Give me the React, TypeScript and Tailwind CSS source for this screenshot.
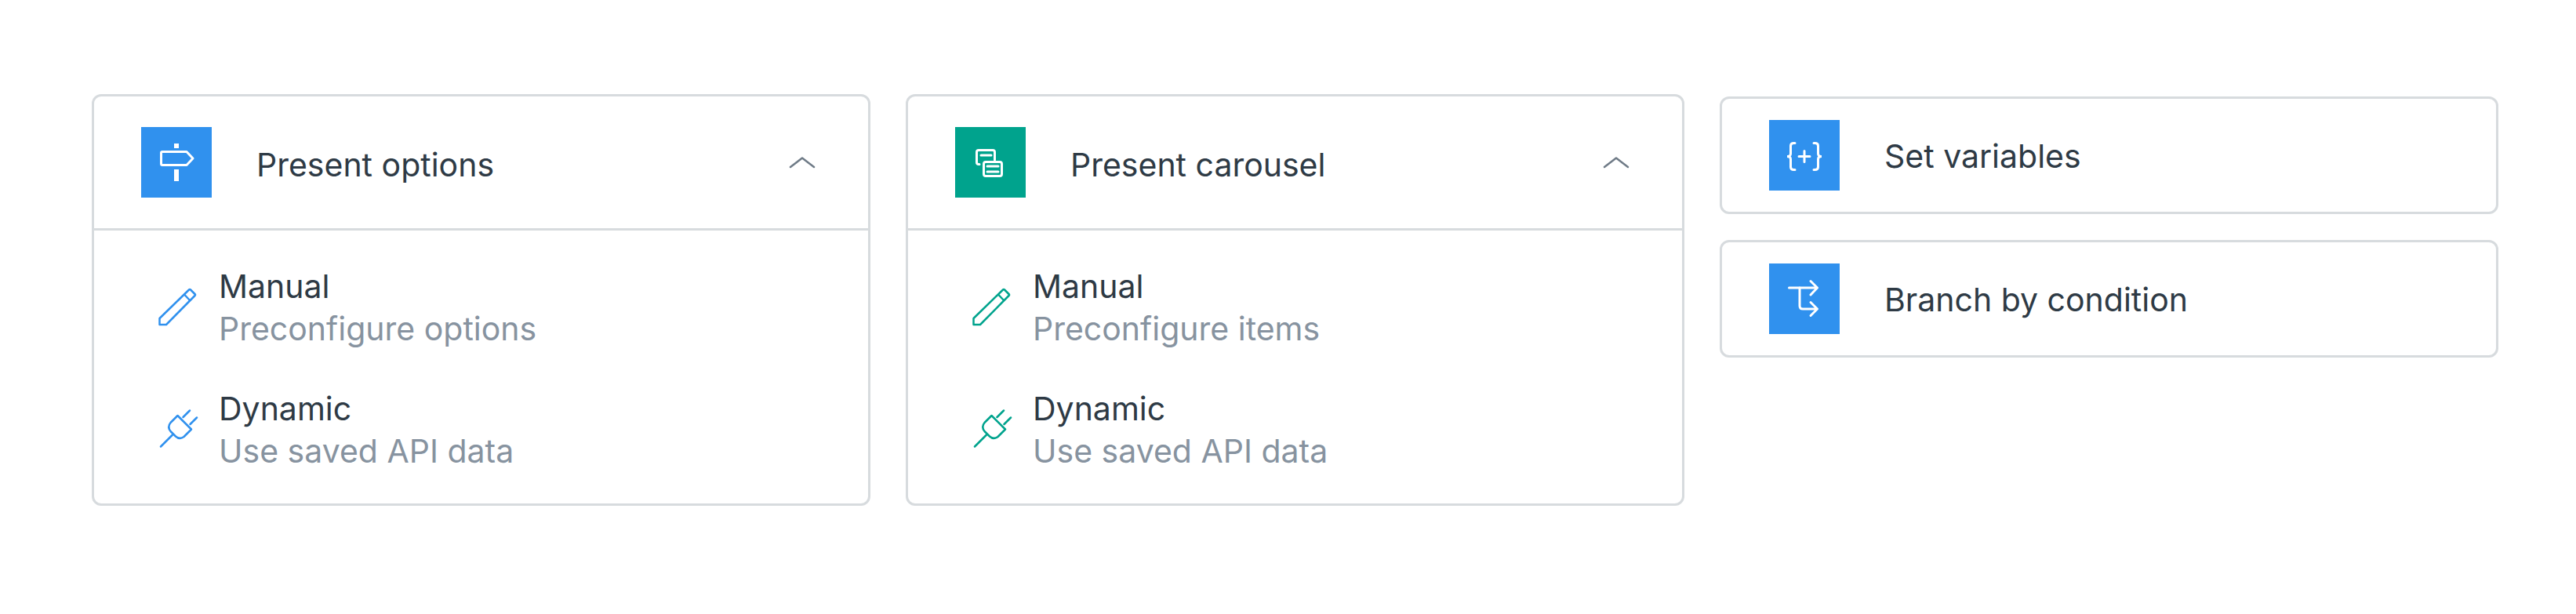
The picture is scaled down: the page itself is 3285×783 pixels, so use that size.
import type { ReactNode } from "react";

const Signpost = () => (
  <svg width="90" height="90" viewBox="0 0 90 90" fill="none" stroke="white" strokeWidth="3">
    <path d="M45 21v6M45 54v15" strokeWidth="6" />
    <path d="M27 31.5H58L66 40L58 48.5H27Q25.5 48.5 25.5 47V33Q25.5 31.5 27 31.5Z" strokeLinejoin="round" />
  </svg>
);

const CarouselIcon = () => (
  <svg width="90" height="90" viewBox="0 0 90 90" fill="none" stroke="white" strokeWidth="3" strokeLinecap="round">
    <path d="M31 47.5H30Q27.5 47.5 27.5 45V32Q27.5 29.5 30 29.5H48Q50.5 29.5 50.5 32V42" />
    <path d="M33 36H46M41 50H55M41 57H55" />
    <rect x="36.5" y="44.5" width="23" height="18" rx="2.5" />
  </svg>
);

const VariablesIcon = () => (
  <svg width="90" height="90" viewBox="0 0 90 90" fill="none" stroke="white" strokeWidth="3" strokeLinecap="round">
    <path d="M33 29.5H31.5Q27.5 29.5 27.5 33V43Q27.5 46.5 23 46.5Q27.5 46.5 27.5 50V60Q27.5 63.5 31.5 63.5H33" />
    <path d="M57 29.5H58.5Q62.5 29.5 62.5 33V43Q62.5 46.5 67 46.5Q62.5 46.5 62.5 50V60Q62.5 63.5 58.5 63.5H57" />
    <path d="M38 46.5H52M45 39.5V53.5" />
  </svg>
);

const BranchIcon = () => (
  <svg width="90" height="90" viewBox="0 0 90 90" fill="none" stroke="white" strokeWidth="3" strokeLinecap="round" strokeLinejoin="round">
    <path d="M25.5 31H61M53 22.5L61.5 31L53 40" />
    <path d="M39 31V54Q39 58 43 58H61M53 49.5L61.5 58L53 66.5" />
  </svg>
);

const Pencil = ({ color }: { color: string }) => (
  <svg width="100" height="100" viewBox="0 0.5 100 100" fill="none" stroke={color} strokeWidth="2.5" strokeLinejoin="round">
    <path d="M23.5 65.5V73.5H32L68.5 36.5Q69.5 35.5 68.5 34.5L63 29Q62 28 61 29Z" />
    <path d="M55 35L62.5 43" />
  </svg>
);

const Plug = ({ color }: { color: string }) => (
  <svg width="100" height="100" viewBox="0 -3.5 100 100" fill="none" stroke={color} strokeWidth="2.5" strokeLinecap="round" strokeLinejoin="round">
    <path d="M25 69L40 54" />
    <path d="M46.5 29.5L64 47L54.5 56.5Q49 60.5 44 56L37.5 49.5Q33 44 37.5 38.5Z" />
    <path d="M53.5 31.5L62 23M62.5 40.5L71 32" />
  </svg>
);

const Chevron = () => (
  <svg width="34" height="16" viewBox="0 0 34 16" fill="none" stroke="#6f7b87" strokeWidth="2.5" strokeLinecap="round" strokeLinejoin="round">
    <path d="M2 14L17 2.5L32 14" />
  </svg>
);

const Row = ({ icon, title, sub }: { icon: ReactNode; title: string; sub: string }) => (
  <div className="flex items-center">
    <div className="w-[99px] shrink-0">{icon}</div>
    <div className="pt-[3px] text-[41px] leading-[54px]">
      <div className="text-[#2e3a45]">{title}</div>
      <div className="text-[#8793a0]">{sub}</div>
    </div>
  </div>
);

const ExpandedCard = ({ icon, bg, color, title, sub }: { icon: ReactNode; bg: string; color: string; title: string; sub: string }) => (
  <div className="w-[993px] h-[525px] shrink-0 rounded-[12px] border-[3px] border-[#d7dbde]">
    <div className="h-[171px] flex items-center border-b-[3px] border-[#d7dbde] pl-[60px] pr-[67px]">
      <div className={`w-[90px] h-[90px] shrink-0 ${bg}`}>{icon}</div>
      <div className="ml-[57px] pt-[8px] flex-1 text-[41px] text-[#2e3a45]">{title}</div>
      <Chevron />
    </div>
    <div className="pl-[60px] pt-[41px] flex flex-col gap-[45px]">
      <Row icon={<Pencil color={color} />} title="Manual" sub={sub} />
      <Row icon={<Plug color={color} />} title="Dynamic" sub="Use saved API data" />
    </div>
  </div>
);

const SmallCard = ({ icon, title }: { icon: ReactNode; title: string }) => (
  <div className="h-[150px] flex items-center rounded-[12px] border-[3px] border-[#d7dbde] pl-[60px]">
    <div className="w-[90px] h-[90px] shrink-0 bg-[#3091ee]">{icon}</div>
    <div className="ml-[57px] pt-[3px] text-[41px] text-[#2e3a45]">{title}</div>
  </div>
);

export default function App() {
  return (
    <div className="w-[3285px] h-[783px] bg-white font-['Inter',sans-serif] flex items-start pl-[117px] pt-[120px] gap-[45px]">
      <ExpandedCard icon={<Signpost />} bg="bg-[#3091ee]" color="#3091ee" title="Present options" sub="Preconfigure options" />
      <ExpandedCard icon={<CarouselIcon />} bg="bg-[#00a38d]" color="#00a38d" title="Present carousel" sub="Preconfigure items" />
      <div className="w-[993px] pt-[3px] flex flex-col gap-[33px]">
        <SmallCard icon={<VariablesIcon />} title="Set variables" />
        <SmallCard icon={<BranchIcon />} title="Branch by condition" />
      </div>
    </div>
  );
}
